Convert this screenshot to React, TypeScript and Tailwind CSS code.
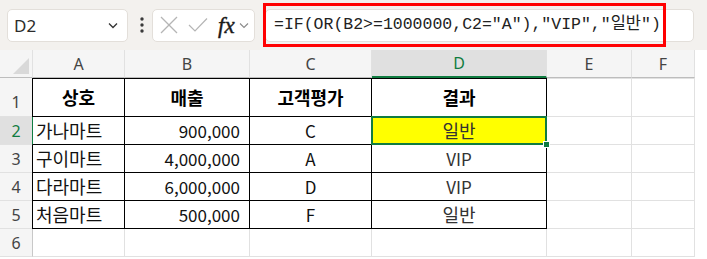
import React from 'react';

const colW = ['w-[93px]', 'w-[125px]', 'w-[122px]', 'w-[175px]', 'w-[85px]', 'w-[63px]'];
const letters = ['A', 'B', 'C', 'D', 'E', 'F'];

type Row = { n: number; h: string; cells: string[] };
const rows: Row[] = [
  { n: 1, h: 'h-[39px]', cells: ['상호', '매출', '고객평가', '결과', '', ''] },
  { n: 2, h: 'h-[28px]', cells: ['가나마트', '900,000', 'C', '일반', '', ''] },
  { n: 3, h: 'h-[28px]', cells: ['구이마트', '4,000,000', 'A', 'VIP', '', ''] },
  { n: 4, h: 'h-[28px]', cells: ['다라마트', '6,000,000', 'D', 'VIP', '', ''] },
  { n: 5, h: 'h-[28px]', cells: ['처음마트', '500,000', 'F', '일반', '', ''] },
  { n: 6, h: 'h-[28px]', cells: ['', '', '', '', '', ''] },
];

const isKorean = (t: string) => /[\uac00-\ud7a3]/.test(t);

function cellClass(r: number, c: number) {
  const inTable = r >= 1 && r <= 5 && c <= 3;
  const parts: string[] = ['flex items-center shrink-0 border-r border-b', colW[c]];
  parts.push(inTable ? 'border-r-black border-b-black' : 'border-r-[#e1e1e1] border-b-[#e1e1e1]');
  if (c === 0) {
    parts.push('border-l');
    if (r === 2) parts.push('border-l-[#107c41]');
    else if (inTable) parts.push('border-l-black');
    else parts.push('border-l-[#c8c8c8]');
  }
  if (r === 1) {
    parts.push('border-t');
    parts.push(inTable ? 'border-t-black' : 'border-t-[#e1e1e1]');
  }
  if (r === 1) parts.push('justify-center font-bold');
  else if (c === 0) parts.push('justify-start pl-[3px]');
  else if (c === 1) parts.push('justify-end pr-[9px]');
  else parts.push('justify-center');
  if (r === 2 && c === 3) parts.push('bg-[#ffff00] relative z-10');
  return parts.join(' ');
}

export default function App() {
  return (
    <div
      className="w-[707px] h-[259px] bg-white overflow-hidden relative"
      style={{ fontFamily: '"Noto Sans CJK KR", "Noto Sans", sans-serif' }}
    >
      {/* Toolbar */}
      <div className="h-[50px] bg-[#f3f1ee] flex items-center">
        <div className="ml-[7px] w-[121px] h-[33px] bg-white rounded-[5px] border border-[#e3dfda] flex items-center justify-between pl-[6px] pr-[9px]">
          <span className="text-[17px] text-[#2b2b2b] leading-none" style={{ fontFamily: '"Noto Sans", sans-serif' }}>D2</span>
          <svg width="10" height="7" viewBox="0 0 10 7">
            <polyline points="1,1.5 5,5.5 9,1.5" fill="none" stroke="#333" strokeWidth="1.3" />
          </svg>
        </div>
        <svg className="ml-[11px]" width="6" height="16" viewBox="0 0 6 16">
          <circle cx="3" cy="2" r="1.7" fill="#3a3a3a" />
          <circle cx="3" cy="8" r="1.7" fill="#3a3a3a" />
          <circle cx="3" cy="14" r="1.7" fill="#3a3a3a" />
        </svg>
        <div className="ml-[7px] w-[103px] h-[33px] bg-white rounded-[5px] border border-[#e3dfda] flex items-center pl-[7px]">
          <svg width="18" height="18" viewBox="0 0 18 18">
            <line x1="1" y1="1" x2="17" y2="17" stroke="#b5b5b5" strokeWidth="1.2" />
            <line x1="17" y1="1" x2="1" y2="17" stroke="#b5b5b5" strokeWidth="1.2" />
          </svg>
          <svg className="ml-[10px]" width="20" height="16" viewBox="0 0 20 16">
            <polyline points="1,8 7,14 19,1.5" fill="none" stroke="#b5b5b5" strokeWidth="1.2" />
          </svg>
          <span
            className="ml-[10px] text-[23px] italic text-[#1a1a1a] leading-none"
            style={{ fontFamily: '"Liberation Serif", serif', WebkitTextStroke: '0.4px #1a1a1a' }}
          >
            fx
          </span>
          <svg className="ml-[4px]" width="10" height="7" viewBox="0 0 10 7">
            <polyline points="1,1.5 5,5.5 9,1.5" fill="none" stroke="#8a8a8a" strokeWidth="1.1" />
          </svg>
        </div>
        <div className="ml-[10px] w-[429px] h-[33px] bg-white rounded-[5px] border border-[#e3dfda] flex items-center pl-[8px]">
          <span
            className="text-[16.5px] text-[#222] whitespace-pre leading-none"
            style={{ fontFamily: '"Liberation Mono", "Noto Sans CJK KR", monospace' }}
          >
            =IF(OR(B2&gt;=1000000,C2="A"),"VIP","일반")
          </span>
        </div>
      </div>

      {/* Red highlight */}
      <div className="absolute left-[263px] top-[3px] w-[403px] h-[44px] border-[3px] border-[#ff0000] pointer-events-none" />

      {/* Column headers */}
      <div className="flex h-[28px] bg-[#f5f5f5]">
        <div className="w-[32px] shrink-0 relative border-b border-[#bdbdbd]">
          <svg className="absolute right-[3px] bottom-[3px]" width="16" height="16" viewBox="0 0 16 16">
            <polygon points="16,0 16,16 0,16" fill="#d9d9d9" />
          </svg>
        </div>
        {letters.map((l, i) => (
          <div
            key={l}
            className={`${colW[i]} shrink-0 flex items-center justify-center text-[16px] border-r border-[#e1e1e1] ${
              i === 3
                ? 'bg-[#e0e0e0] text-[#107c41] border-b-2 border-b-[#107c41]'
                : 'text-[#444] border-b border-b-[#bdbdbd]'
            } ${i === 0 ? 'border-l border-l-[#e1e1e1]' : ''}`}
            style={{ fontFamily: '"Noto Sans", sans-serif' }}
          >
            {l}
          </div>
        ))}
        <div className="flex-1 bg-white" />
      </div>

      {/* Rows */}
      {rows.map((row) => (
        <div key={row.n} className={`flex ${row.h}`}>
          <div
            className={`w-[32px] shrink-0 flex justify-center text-[16px] border-b border-[#e1e1e1] ${
              row.n === 1 ? 'items-end pb-[2px]' : 'items-center'
            } ${row.n === 2 ? 'text-[#107c41] bg-[#e0e0e0]' : 'text-[#444] bg-[#f5f5f5]'}`}
            style={{ fontFamily: '"Noto Sans", sans-serif' }}
          >
            {row.n}
          </div>
          {row.cells.map((t, c) => (
            <div key={c} className={`${cellClass(row.n, c)} text-[#111]`}>
              <span
                className={`${isKorean(t) ? 'text-[18px]' : 'text-[17px]'} ${
                  row.n === 1 ? 'text-black' : c === 3 ? 'text-[#333]' : ''
                }`}
              >
                {t}
              </span>
              {row.n === 2 && c === 3 && (
                <>
                  <div className="absolute -left-[1px] -top-[1px] -right-[1px] -bottom-[1px] border-2 border-[#107c41] pointer-events-none" />
                  <div className="absolute -right-[4px] -bottom-[4px] w-[7px] h-[7px] bg-[#107c41] border border-white" />
                </>
              )}
            </div>
          ))}
          <div className="flex-1" />
        </div>
      ))}
    </div>
  );
}
